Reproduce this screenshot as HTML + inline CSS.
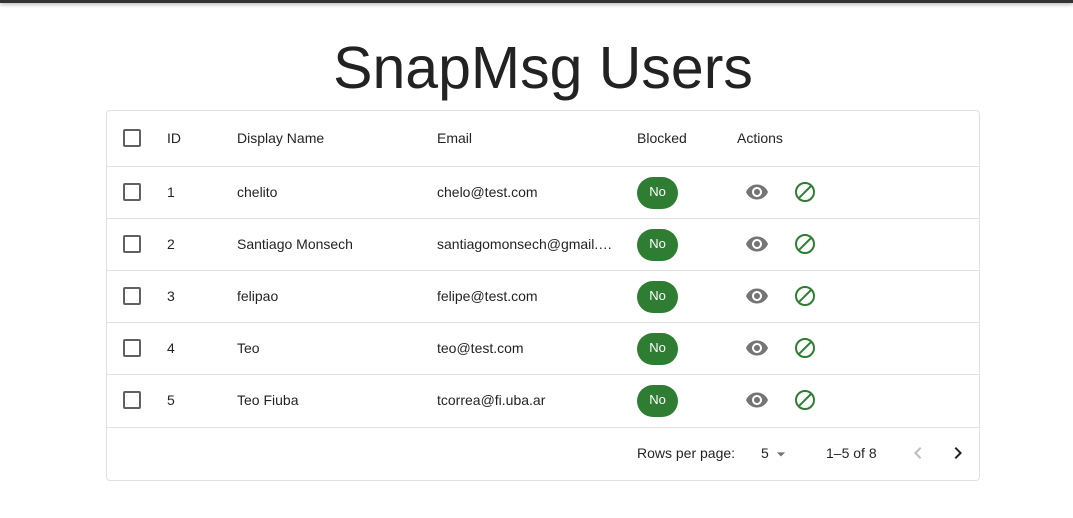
<!DOCTYPE html>
<html><head><meta charset="utf-8"><style>
*{box-sizing:border-box;margin:0;padding:0}
body{width:1073px;height:518px;background:#fff;font-family:"Liberation Sans",Arial,sans-serif;color:rgba(0,0,0,.87);position:relative;overflow:hidden}
.bar{position:absolute;left:0;top:0;width:1073px;height:3px;background:#333;box-shadow:0 1px 4px rgba(0,0,0,.4)}
h1{position:absolute;left:0;width:1086px;top:30px;text-align:center;font-weight:400;font-size:59px;line-height:76px;color:#222}
.card{position:absolute;left:106px;top:110px;width:874px;height:371px;border:1px solid #e0e0e0;border-radius:4px}
.row{position:absolute;left:0;width:872px;border-bottom:1px solid #e0e0e0;font-size:14px}
.row span{position:absolute;top:50%;margin-top:-1px;transform:translateY(-50%);white-space:nowrap}
.cb{position:absolute;left:16px;top:50%;margin-top:-10px;width:18px;height:18px;border:2px solid #616161;border-radius:2px}
.chip{position:absolute;left:530px;top:50%;margin-top:-16px;width:41px;height:32px;border-radius:16px;background:#2e7d32;color:#fff;font-size:13px;text-align:center;line-height:30px}
.ic{position:absolute;top:50%;margin-top:-13px}
.foot{position:absolute;left:0;top:317px;width:872px;height:52px;font-size:14px}
.foot span{position:absolute;top:50%;margin-top:-1px;transform:translateY(-50%)}
</style></head><body>
<div class="bar"></div>
<h1>SnapMsg Users</h1>
<div class="card">
<div class="row" style="top:0;height:56px;font-weight:400"><div class="cb"></div><span style="left:60px">ID</span><span style="left:130px">Display Name</span><span style="left:330px">Email</span><span style="left:530px">Blocked</span><span style="left:630px">Actions</span></div>
<div class="row" style="top:56px;height:52px"><div class="cb"></div><span style="left:60px">1</span><span style="left:130px">chelito</span><span style="left:330px">chelo@test.com</span><div class="chip">No</div>
<svg class="ic" style="left:638px" width="24" height="24" viewBox="0 0 24 24"><path fill="#757575" d="M12 4.5C7 4.5 2.73 7.61 1 12c1.73 4.39 6 7.5 11 7.5s9.27-3.11 11-7.5c-1.73-4.39-6-7.5-11-7.5M12 17c-2.76 0-5-2.24-5-5s2.24-5 5-5 5 2.24 5 5-2.24 5-5 5m0-8c-1.66 0-3 1.34-3 3s1.34 3 3 3 3-1.34 3-3-1.34-3-3-3"/></svg>
<svg class="ic" style="left:686px" width="24" height="24" viewBox="0 0 24 24"><circle cx="12" cy="12" r="9" fill="none" stroke="#2e7d32" stroke-width="2"/><path d="M5.8 18.2 18.2 5.8" stroke="#2e7d32" stroke-width="2"/></svg></div>
<div class="row" style="top:108px;height:52px"><div class="cb"></div><span style="left:60px">2</span><span style="left:130px">Santiago Monsech</span><span style="left:330px">santiagomonsech@gmail.…</span><div class="chip">No</div>
<svg class="ic" style="left:638px" width="24" height="24" viewBox="0 0 24 24"><path fill="#757575" d="M12 4.5C7 4.5 2.73 7.61 1 12c1.73 4.39 6 7.5 11 7.5s9.27-3.11 11-7.5c-1.73-4.39-6-7.5-11-7.5M12 17c-2.76 0-5-2.24-5-5s2.240-5 5-5 5 2.24 5 5-2.24 5-5 5m0-8c-1.66 0-3 1.34-3 3s1.34 3 3 3 3-1.34 3-3-1.34-3-3-3"/></svg>
<svg class="ic" style="left:686px" width="24" height="24" viewBox="0 0 24 24"><circle cx="12" cy="12" r="9" fill="none" stroke="#2e7d32" stroke-width="2"/><path d="M5.8 18.2 18.2 5.8" stroke="#2e7d32" stroke-width="2"/></svg></div>
<div class="row" style="top:160px;height:52px"><div class="cb"></div><span style="left:60px">3</span><span style="left:130px">felipao</span><span style="left:330px">felipe@test.com</span><div class="chip">No</div>
<svg class="ic" style="left:638px" width="24" height="24" viewBox="0 0 24 24"><path fill="#757575" d="M12 4.5C7 4.5 2.73 7.61 1 12c1.73 4.39 6 7.5 11 7.5s9.27-3.11 11-7.5c-1.73-4.39-6-7.5-11-7.5M12 17c-2.76 0-5-2.24-5-5s2.24-5 5-5 5 2.24 5 5-2.24 5-5 5m0-8c-1.66 0-3 1.34-3 3s1.34 3 3 3 3-1.34 3-3-1.34-3-3-3"/></svg>
<svg class="ic" style="left:686px" width="24" height="24" viewBox="0 0 24 24"><circle cx="12" cy="12" r="9" fill="none" stroke="#2e7d32" stroke-width="2"/><path d="M5.8 18.2 18.2 5.8" stroke="#2e7d32" stroke-width="2"/></svg></div>
<div class="row" style="top:212px;height:52px"><div class="cb"></div><span style="left:60px">4</span><span style="left:130px">Teo</span><span style="left:330px">teo@test.com</span><div class="chip">No</div>
<svg class="ic" style="left:638px" width="24" height="24" viewBox="0 0 24 24"><path fill="#757575" d="M12 4.5C7 4.5 2.73 7.61 1 12c1.73 4.39 6 7.5 11 7.5s9.27-3.11 11-7.5c-1.73-4.39-6-7.5-11-7.5M12 17c-2.76 0-5-2.24-5-5s2.24-5 5-5 5 2.24 5 5-2.24 5-5 5m0-8c-1.66 0-3 1.34-3 3s1.34 3 3 3 3-1.34 3-3-1.34-3-3-3"/></svg>
<svg class="ic" style="left:686px" width="24" height="24" viewBox="0 0 24 24"><circle cx="12" cy="12" r="9" fill="none" stroke="#2e7d32" stroke-width="2"/><path d="M5.8 18.2 18.2 5.8" stroke="#2e7d32" stroke-width="2"/></svg></div>
<div class="row" style="top:264px;height:53px"><div class="cb"></div><span style="left:60px">5</span><span style="left:130px">Teo Fiuba</span><span style="left:330px">tcorrea@fi.uba.ar</span><div class="chip">No</div>
<svg class="ic" style="left:638px" width="24" height="24" viewBox="0 0 24 24"><path fill="#757575" d="M12 4.5C7 4.5 2.73 7.61 1 12c1.73 4.39 6 7.5 11 7.5s9.27-3.11 11-7.5c-1.73-4.39-6-7.5-11-7.5M12 17c-2.76 0-5-2.24-5-5s2.24-5 5-5 5 2.24 5 5-2.24 5-5 5m0-8c-1.66 0-3 1.34-3 3s1.34 3 3 3 3-1.34 3-3-1.34-3-3-3"/></svg>
<svg class="ic" style="left:686px" width="24" height="24" viewBox="0 0 24 24"><circle cx="12" cy="12" r="9" fill="none" stroke="#2e7d32" stroke-width="2"/><path d="M5.8 18.2 18.2 5.8" stroke="#2e7d32" stroke-width="2"/></svg></div>
<div class="foot">
<span style="left:530px">Rows per page:</span>
<span style="left:654px">5</span>
<svg style="position:absolute;left:664px;top:16px" width="20" height="20" viewBox="0 0 24 24"><path d="M7 10l5 5 5-5z" fill="#757575"/></svg>
<span style="left:719px">1–5 of 8</span>
<svg style="position:absolute;left:799px;top:13px" width="24" height="24" viewBox="0 0 24 24"><path d="M15.41 7.41 14 6l-6 6 6 6 1.41-1.41L10.83 12z" fill="#bdbdbd"/></svg>
<svg style="position:absolute;left:839px;top:13px" width="24" height="24" viewBox="0 0 24 24"><path d="M10 6 8.59 7.41 13.17 12l-4.58 4.59L10 18l6-6z" fill="#222"/></svg>
</div>
</div>
</body></html>
